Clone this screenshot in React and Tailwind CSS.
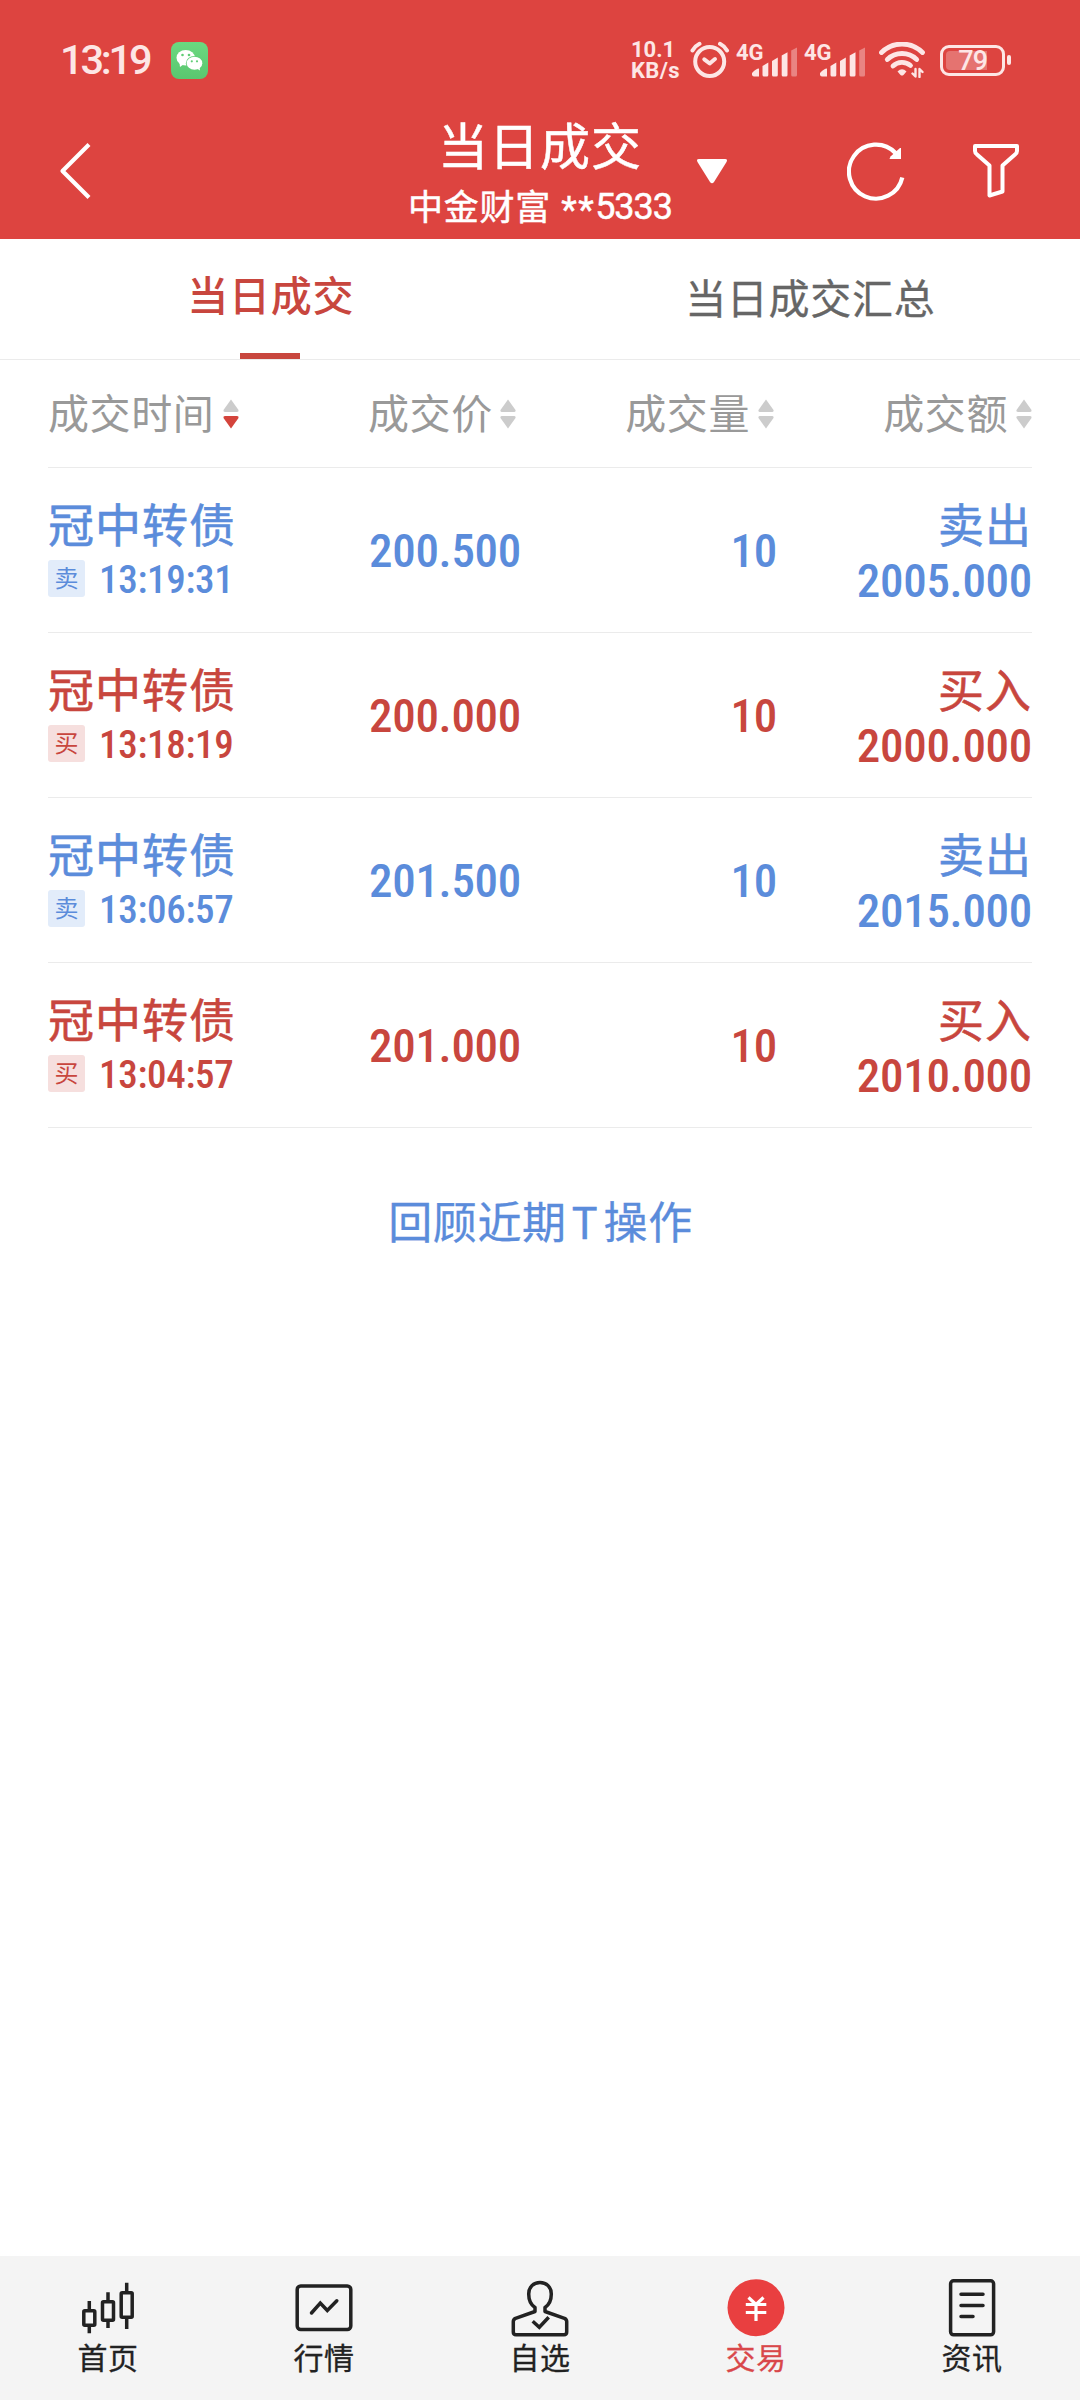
import clsx from "clsx";

const HEADERS = [
  { label: "成交时间", width: "w-[320px]", gap: "ml-[9px]", active: true },
  { label: "成交价", width: "w-[200px]", gap: "ml-[7px]" },
  { label: "成交量", width: "w-[206px] justify-end", gap: "ml-[8px]" },
  { label: "成交额", width: "flex-1 justify-end", gap: "ml-[8px]" },
];

const TRADES = [
  { side: "sell", name: "冠中转债", time: "13:19:31", price: "200.500", qty: 10, amount: "2005.000" },
  { side: "buy", name: "冠中转债", time: "13:18:19", price: "200.000", qty: 10, amount: "2000.000" },
  { side: "sell", name: "冠中转债", time: "13:06:57", price: "201.500", qty: 10, amount: "2015.000" },
  { side: "buy", name: "冠中转债", time: "13:04:57", price: "201.000", qty: 10, amount: "2010.000" },
];

const SIDES = {
  sell: { short: "卖", label: "卖出", text: "text-[#5b8cdb]", badge: "bg-[#e2ecfa]" },
  buy: { short: "买", label: "买入", text: "text-[#c8463e]", badge: "bg-[#f6dfde]" },
};

const NAV = [
  { label: "首页", Icon: CandlesIcon },
  { label: "行情", Icon: ChartIcon },
  { label: "自选", Icon: PersonIcon },
  { label: "交易", Icon: YuanIcon, active: true },
  { label: "资讯", Icon: NewsIcon },
];

function WechatIcon() {
  return (
    <svg className="ml-[19px] h-[37px] w-[37px]" viewBox="0 0 37 37">
      <defs>
        <linearGradient id="wechat" x1="0" y1="0" x2="0" y2="1">
          <stop offset="0" stopColor="#6bd980" />
          <stop offset="1" stopColor="#5ac66f" />
        </linearGradient>
      </defs>
      <rect width="37" height="37" rx="8" fill="url(#wechat)" />
      <path d="M8.5 20.5 L9 25 L13 22 Z" fill="#fff" />
      <ellipse cx="14.7" cy="15.7" rx="9.2" ry="7.7" fill="#fff" />
      <ellipse cx="23.5" cy="21.2" rx="8.6" ry="7.3" fill="#60cd76" />
      <path d="M25 26 L29 28.5 L28.5 24.5 Z" fill="#fff" />
      <ellipse cx="23.5" cy="21.2" rx="7.8" ry="6.5" fill="#fff" />
      <g fill="#60cd76">
        <circle cx="11.5" cy="13" r="1.3" />
        <circle cx="18" cy="13" r="1.3" />
        <circle cx="20.8" cy="19.3" r="1.1" />
        <circle cx="26" cy="19.3" r="1.1" />
      </g>
    </svg>
  );
}

function AlarmIcon() {
  return (
    <svg
      className="ml-[10px] h-[38px] w-[40px]"
      viewBox="0 0 40 38"
      fill="none"
      stroke="currentColor"
      strokeLinecap="round"
      strokeLinejoin="round"
    >
      <circle cx="19.7" cy="20.5" r="14.5" strokeWidth="4" />
      <path d="M2.5 9.5 Q5 5 9.5 2.8 M30 2.8 Q34.5 5 37 9.5" strokeWidth="4" />
      <path d="M14.3 18.3 L19.7 22.5 L25 18" strokeWidth="4" />
    </svg>
  );
}

function Signal() {
  return (
    <div className="ml-[6px] flex h-[34px] w-[62px] items-end">
      <span className="self-start text-[22px] leading-[20px] font-bold">4G</span>
      <svg className="-ml-[12px] h-[30px] w-[46px] shrink-0" viewBox="0 0 46 30" fill="currentColor">
        <path d="M0 26 Q4 21.5 7 21.5 V29.5 H2 Q0 29.5 0 27.5 Z" />
        <path d="M10.5 19 L16.3 15.5 V28 Q16.3 29.5 14.8 29.5 H12 Q10.5 29.5 10.5 28 Z" />
        <path d="M20 14 L25.8 10.5 V28 Q25.8 29.5 24.3 29.5 H21.5 Q20 29.5 20 28 Z" />
        <path d="M29.7 8.5 L35.5 5.3 V28 Q35.5 29.5 34 29.5 H31.2 Q29.7 29.5 29.7 28 Z" />
        <path d="M39.2 3.5 L45 0.5 V28 Q45 29.5 43.5 29.5 H40.7 Q39.2 29.5 39.2 28 Z" opacity="0.4" />
      </svg>
    </div>
  );
}

function WifiIcon() {
  return (
    <svg
      className="ml-[13px] h-[36px] w-[47px]"
      viewBox="0 0 47 36"
      fill="none"
      stroke="currentColor"
      strokeWidth="4.8"
      strokeLinecap="round"
    >
      <path d="M2.5 10.5 A29 29 0 0 1 43.5 10.5" />
      <path d="M8.3 17.5 A21 21 0 0 1 37.7 17.5" />
      <path d="M14 24 A13 13 0 0 1 31.5 23.5" />
      <path d="M18.5 29.5 Q23 25 27.5 29.5 L24.5 33 Q23 34 21.5 33 Z" fill="currentColor" stroke="none" />
      <path d="M36.5 27 V34.5 L33.5 31.5 M40.5 35 V27 L43.5 30" strokeWidth="2.4" strokeLinejoin="round" />
    </svg>
  );
}

function Battery() {
  return (
    <div className="ml-[14px] flex items-center">
      <div className="h-[31px] w-[65px] rounded-[9px] border-[3px] border-current p-[3px]">
        <div className="flex h-full w-[41px] justify-end rounded-l-[4px] bg-white/25">
          <span className="text-[27px] leading-[20px] font-medium tracking-[-1px]">79</span>
        </div>
      </div>
      <div className="ml-[2px] h-[10px] w-[4px] rounded-[2px] bg-current" />
    </div>
  );
}

function StatusBar() {
  return (
    <div className="flex h-[120px] items-center justify-between pr-[69px] pl-[60px] font-['Roboto',sans-serif] text-[#fde6e5]">
      <div className="flex items-center">
        <span className="w-[92px] text-[41.5px] leading-none font-medium tracking-[-3.2px] whitespace-nowrap">13:19</span>
        <WechatIcon />
      </div>
      <div className="flex items-center">
        <div className="text-[22px] leading-[21px] font-bold">
          <div className="h-[21px]">10.1</div>
          <div className="h-[21px] tracking-[0.4px]">KB/s</div>
        </div>
        <AlarmIcon />
        <Signal />
        <Signal />
        <WifiIcon />
        <Battery />
      </div>
    </div>
  );
}

function TitleBar() {
  return (
    <div className="flex h-[119px] pl-[58px] text-white [-webkit-text-stroke:0.5px]">
      <svg
        className="mt-[22px] h-[58px] w-[34px]"
        viewBox="0 0 34 58"
        fill="none"
        stroke="currentColor"
        strokeWidth="4.2"
        strokeLinejoin="round"
      >
        <path d="M31 2.5 L4.5 29 L31 55.5" />
      </svg>
      <div className="ml-[316px] flex w-[264px] flex-col items-center whitespace-nowrap">
        <h1 className="-mt-[5px] text-[50px] leading-[56px] tracking-[1px]">当日成交</h1>
        <div className="mt-[14px] flex text-[35px] leading-[40px] tracking-[0.8px]">
          中金财富
          <span className="relative top-[5px] ml-[10px] font-['Roboto',sans-serif] text-[36px] tracking-[1.5px]">**</span>
          <span className="relative top-[2px] font-['Roboto',sans-serif] text-[36px] tracking-[-1px]">5333</span>
        </div>
      </div>
      <svg className="mt-[39px] ml-[25px] h-[25px] w-[30px]" viewBox="0 0 30 25" fill="currentColor">
        <path d="M2 0 H28 Q31 0 29.5 3 L17 23 Q15 25.5 13 23 L0.5 3 Q-1 0 2 0 Z" />
      </svg>
      <svg className="mt-[20px] ml-[120px] h-[62px] w-[60px]" viewBox="0 0 60 62" fill="none">
        <path d="M55.3 37.5 A27 27 0 1 1 48.5 13 L51 15.5" stroke="currentColor" strokeWidth="4.2" />
        <path d="M54 8 V19 H42.5 L43.5 16.5 L53 8 Z" fill="currentColor" />
      </svg>
      <svg
        className="mt-[22px] ml-[64px] h-[58px] w-[50px]"
        viewBox="0 0 50 58"
        fill="none"
        stroke="currentColor"
        strokeWidth="4"
        strokeLinejoin="round"
      >
        <path d="M4 4 H46 V9 Q46 11 44 12.5 L31.5 23.5 V49.5 L18.5 53.5 V23.5 L6 12.5 Q4 11 4 9 Z" />
      </svg>
    </div>
  );
}

function Tabs() {
  return (
    <div className="flex h-[121px] border-b border-[#ebebeb] text-[41px] leading-[60px] tracking-[0.7px]">
      <div className="relative flex-1 pt-[24px] pl-px text-center font-medium text-[#c8463e]">
        当日成交
        <div className="absolute bottom-0 left-1/2 h-[6px] w-[60px] -translate-x-1/2 bg-[#c8463e]" />
      </div>
      <div className="flex-1 pt-[27px] text-center text-[#666] [-webkit-text-stroke:0.3px]">当日成交汇总</div>
    </div>
  );
}

function SortArrows({ active, className }) {
  return (
    <svg className={clsx("h-[30px] w-[16px]", className)} viewBox="0 0 16 30">
      <path d="M8 0.5 L15.5 11 Q16 13 14 13 H2 Q0 13 0.5 11 Z" fill="#ccc" />
      <path d="M8 29.5 L15.5 19 Q16 17 14 17 H2 Q0 17 0.5 19 Z" fill={active ? "#d4443c" : "#ccc"} />
    </svg>
  );
}

function TradeRow({ trade }) {
  const side = SIDES[trade.side];
  const num = "font-['Roboto_Condensed',sans-serif] text-[47px] font-medium tracking-[-0.3px]";
  return (
    <div className={clsx("flex h-[165px] border-b border-[#ebebeb]", side.text)}>
      <div className="w-[321px] pt-[28px]">
        <div className="text-[46px] leading-[52px] tracking-[1px] [-webkit-text-stroke:0.6px]">{trade.name}</div>
        <div className="mt-[12px] flex h-[37px] items-center">
          <span className={clsx("h-[37px] w-[37px] rounded-[3px] text-center text-[24px] leading-[34px]", side.badge)}>
            {side.short}
          </span>
          <span className="mt-[3px] ml-[14px] font-['Roboto_Condensed',sans-serif] text-[39px] leading-none font-medium tracking-[-0.3px]">
            {trade.time}
          </span>
        </div>
      </div>
      <div className={clsx("flex w-[200px] items-center pt-[3px]", num)}>{trade.price}</div>
      <div className={clsx("flex w-[208px] items-center justify-end pt-[3px]", num)}>{trade.qty}</div>
      <div className="flex flex-1 flex-col items-end pt-[28px]">
        <div className="text-[46px] leading-[52px] tracking-[1px] [-webkit-text-stroke:0.6px]">{side.label}</div>
        <div className={clsx("mt-[14px] leading-[37px]", num)}>{trade.amount}</div>
      </div>
    </div>
  );
}

function NavSvg({ children }) {
  return (
    <svg
      className="h-[58px] w-[58px]"
      viewBox="0 0 58 58"
      fill="none"
      stroke="currentColor"
      strokeWidth="3.5"
      strokeLinejoin="round"
    >
      {children}
    </svg>
  );
}

function CandlesIcon() {
  return (
    <NavSvg>
      <rect x="4.8" y="31.7" width="11" height="14.6" rx="1" />
      <rect x="23.5" y="22.7" width="11" height="18.6" rx="1" />
      <rect x="42.2" y="13.7" width="11" height="24.6" rx="1" />
      <path d="M10.3 22 V31 M10.3 47 V54.3 M29 13.3 V22 M29 42 V49 M47.7 3.7 V13 M47.7 39 V50" />
    </NavSvg>
  );
}

function ChartIcon() {
  return (
    <NavSvg>
      <rect x="2.2" y="7" width="53.6" height="43.5" rx="3.5" />
      <path d="M16.5 34 L25.3 24 L32.3 31.5 L41.8 21.8" strokeLinejoin="miter" strokeLinecap="round" />
    </NavSvg>
  );
}

function PersonIcon() {
  return (
    <NavSvg>
      <path d="M24 32.5 V28.5 C19.5 25.5 17.7 22 17.7 15 C17.7 8 22.5 3.5 29 3.5 C35.5 3.5 40.3 8 40.3 15 C40.3 22 38.5 25.5 34 28.5 V32.5 L53.5 39.3 Q55.7 40.3 55.7 42.5 V53 Q55.7 55.7 53 55.7 H5 Q2.3 55.7 2.3 53 V42.5 Q2.3 40.3 4.5 39.3 Z" />
      <path d="M21.7 42.3 L28.3 48.2 L37.7 38.3" strokeLinejoin="miter" />
    </NavSvg>
  );
}

function YuanIcon() {
  return (
    <NavSvg>
      <circle cx="29" cy="28.7" r="28.5" fill="#e93f40" stroke="none" />
      <path d="M21.5 18.5 L29 25.5 L36.5 18.5 M18.8 25.5 H39.3 M18.8 33.5 H39.3 M29 25 V42" stroke="#fff" strokeWidth="3.2" />
    </NavSvg>
  );
}

function NewsIcon() {
  return (
    <NavSvg>
      <rect x="7.6" y="1.8" width="43" height="54" rx="3" />
      <path d="M18 15.3 H40 M18 26.5 H40 M18 37.5 H30" strokeLinecap="round" />
    </NavSvg>
  );
}

export default function App() {
  return (
    <div className="flex h-[2400px] w-[1080px] flex-col bg-white font-['Noto_Sans_CJK_SC',sans-serif]">
      <header className="bg-[#dd4440]">
        <StatusBar />
        <TitleBar />
      </header>

      <Tabs />

      <main className="flex flex-1 flex-col px-12">
        <div className="flex h-[108px] items-center border-b border-[#ebebeb] text-[41px] tracking-[0.6px] text-[#999]">
          {HEADERS.map(({ label, width, gap, active }) => (
            <div key={label} className={clsx("flex items-center", width)}>
              <span className="pb-[6px] leading-[60px]">{label}</span>
              <SortArrows active={active} className={gap} />
            </div>
          ))}
        </div>

        {TRADES.map((trade) => (
          <TradeRow key={trade.time} trade={trade} />
        ))}

        <a className="mt-[62px] pl-px text-center text-[44px] leading-[60px] tracking-[0.6px] text-[#5b8cdb] [-webkit-text-stroke:0.3px]">
          回顾近期<span className="mx-[5px]">T</span>操作
        </a>
      </main>

      <nav className="flex h-[144px] bg-[#f4f4f4] pt-[23px]">
        {NAV.map(({ label, Icon, active }) => (
          <div key={label} className={clsx("flex flex-1 flex-col items-center", active ? "text-[#d9474a]" : "text-[#222]")}>
            <Icon />
            <span className="mt-px text-[30px] leading-[36px] tracking-[0.6px] [-webkit-text-stroke:0.3px]">{label}</span>
          </div>
        ))}
      </nav>
    </div>
  );
}
